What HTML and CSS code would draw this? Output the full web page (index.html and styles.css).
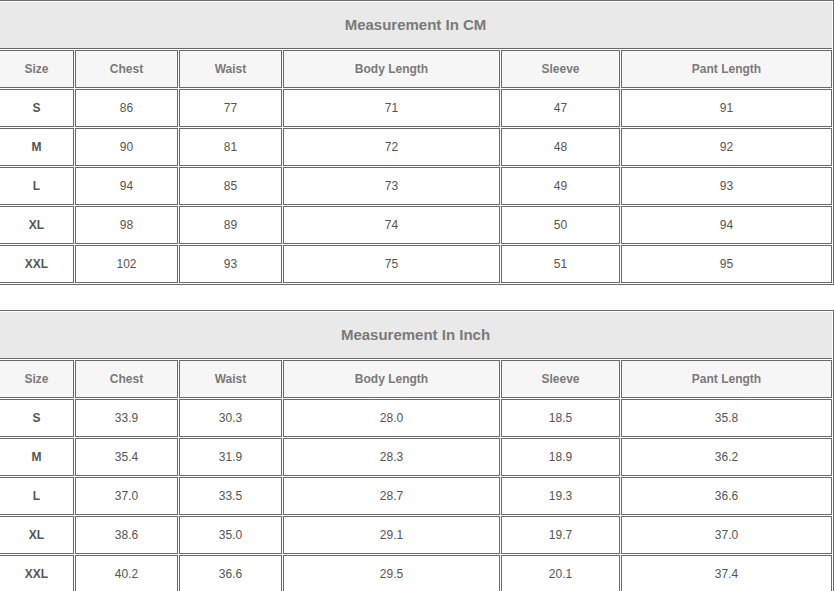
FILE: index.html
```html
<!DOCTYPE html>
<html>
<head>
<meta charset="utf-8">
<link rel="stylesheet" href="styles.css">
</head>
<body>
<table class="size-table">
  <colgroup>
    <col class="c-size"><col class="c-chest"><col class="c-waist"><col class="c-body"><col class="c-sleeve"><col class="c-pant">
  </colgroup>
  <tr><th class="title" colspan="6">Measurement In CM</th></tr>
  <tr class="head"><th>Size</th><th>Chest</th><th>Waist</th><th>Body Length</th><th>Sleeve</th><th>Pant Length</th></tr>
  <tr><td class="sz">S</td><td>86</td><td>77</td><td>71</td><td>47</td><td>91</td></tr>
  <tr><td class="sz">M</td><td>90</td><td>81</td><td>72</td><td>48</td><td>92</td></tr>
  <tr><td class="sz">L</td><td>94</td><td>85</td><td>73</td><td>49</td><td>93</td></tr>
  <tr><td class="sz">XL</td><td>98</td><td>89</td><td>74</td><td>50</td><td>94</td></tr>
  <tr><td class="sz">XXL</td><td>102</td><td>93</td><td>75</td><td>51</td><td>95</td></tr>
</table>
<table class="size-table second">
  <colgroup>
    <col class="c-size"><col class="c-chest"><col class="c-waist"><col class="c-body"><col class="c-sleeve"><col class="c-pant">
  </colgroup>
  <tr><th class="title" colspan="6">Measurement In Inch</th></tr>
  <tr class="head"><th>Size</th><th>Chest</th><th>Waist</th><th>Body Length</th><th>Sleeve</th><th>Pant Length</th></tr>
  <tr><td class="sz">S</td><td>33.9</td><td>30.3</td><td>28.0</td><td>18.5</td><td>35.8</td></tr>
  <tr><td class="sz">M</td><td>35.4</td><td>31.9</td><td>28.3</td><td>18.9</td><td>36.2</td></tr>
  <tr><td class="sz">L</td><td>37.0</td><td>33.5</td><td>28.7</td><td>19.3</td><td>36.6</td></tr>
  <tr><td class="sz">XL</td><td>38.6</td><td>35.0</td><td>29.1</td><td>19.7</td><td>37.0</td></tr>
  <tr><td class="sz">XXL</td><td>40.2</td><td>36.6</td><td>29.5</td><td>20.1</td><td>37.4</td></tr>
</table>
</body>
</html>
```
FILE: styles.css
```css
html, body {
  margin: 0;
  padding: 0;
  background: #fff;
  overflow: hidden;
}
body {
  font-family: "Liberation Sans", Arial, sans-serif;
}
.size-table {
  width: 837px;
  margin-left: -3px;
  table-layout: fixed;
  border-collapse: separate;
  border-spacing: 1px;
  border: 1px solid #6a6a6a;
}
.size-table.second {
  margin-top: 25px;
}
.c-size { width: 75px; }
.c-chest { width: 103px; }
.c-waist { width: 103px; }
.c-body { width: 217px; }
.c-sleeve { width: 119px; }
.c-pant { width: 211px; }
.size-table th,
.size-table td {
  padding: 0;
  border: 1px solid #6a6a6a;
  text-align: center;
  line-height: 36px;
  font-size: 12px;
  color: #555;
}
.size-table th.title {
  border: none;
  border-bottom: 1px solid #6a6a6a;
  background: #e9e9e9;
  line-height: 46px;
  font-size: 15px;
  font-weight: bold;
  color: #7a7a7a;
}
.size-table .head th {
  background: #f6f6f6;
  font-weight: bold;
  color: #7a7a7a;
}
.size-table td.sz {
  font-weight: bold;
  color: #555;
}
```
